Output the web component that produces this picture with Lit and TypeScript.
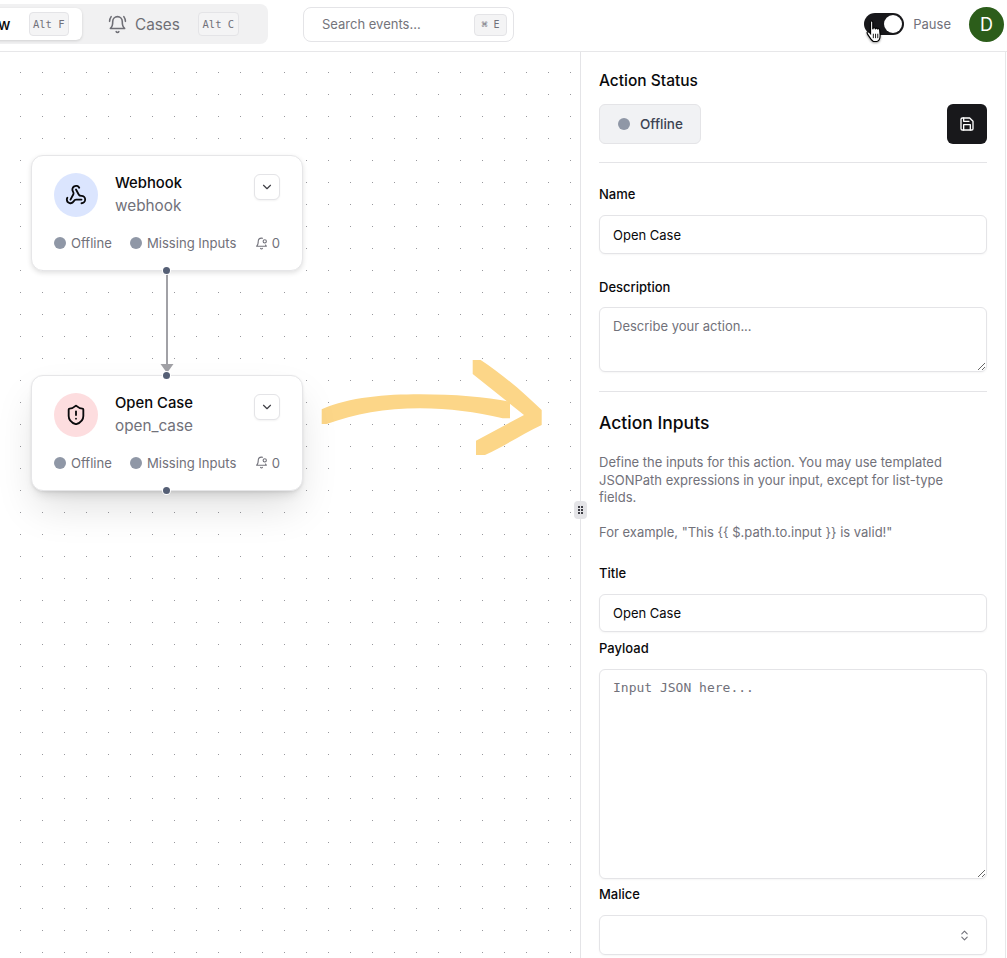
import { LitElement, html, css, svg } from "lit";
import { customElement } from "lit/decorators.js";

const webhookIcon = svg`<path d="M18 16.98h-5.99c-1.1 0-1.95.94-2.48 1.9A4 4 0 0 1 2 17c.01-.7.2-1.4.57-2"/><path d="m6 17 3.13-5.78c.53-.97.1-2.18-.5-3.1a4 4 0 1 1 6.89-4.06"/><path d="m12 6 3.13 5.73C15.66 12.7 16.9 13 18 13a4 4 0 0 1 0 8"/>`;
const shieldIcon = svg`<path d="M20 13c0 5-3.5 7.5-7.66 8.95a1 1 0 0 1-.67-.01C7.5 20.5 4 18 4 13V6a1 1 0 0 1 1-1c2 0 4.5-1.2 6.24-2.72a1.17 1.17 0 0 1 1.52 0C14.51 3.81 17 5 19 5a1 1 0 0 1 1 1z"/><path d="M12 8v4"/><path d="M12 16h.01"/>`;
const chevron = svg`<path d="m6 9 6 6 6-6"/>`;
const bellDot = svg`<path d="M19.4 14.9C20.2 16.4 21 17 21 17H3s3-2 3-9c0-3.3 2.7-6 6-6 .7 0 1.3.1 1.9.3"/><path d="M10.3 21a1.94 1.94 0 0 0 3.4 0"/><circle cx="18" cy="8" r="3"/>`;
const bellRing = svg`<path d="M6 8a6 6 0 0 1 12 0c0 7 3 9 3 9H3s3-2 3-9"/><path d="M10.3 21a1.94 1.94 0 0 0 3.4 0"/><path d="M4 2C2.8 3.7 2 5.7 2 8"/><path d="M22 8c0-2.3-.8-4.3-2-6"/>`;
const saveIcon = svg`<path d="M19 21H5a2 2 0 0 1-2-2V5a2 2 0 0 1 2-2h11l5 5v11a2 2 0 0 1-2 2z"/><polyline points="17 21 17 13 7 13 7 21"/><polyline points="7 3 7 8 15 8"/>`;
const upDown = svg`<path d="m7 15 5 5 5-5"/><path d="m7 9 5-5 5 5"/>`;

@customElement("app-root")
export class AppRoot extends LitElement {
  static styles = css`
    :host {
      display: block;
      width: 1007px;
      height: 958px;
      overflow: hidden;
      background: #fff;
      font-family: Inter, "Liberation Sans", sans-serif;
      color: #09090b;
      position: relative;
    }
    * { box-sizing: border-box; }
    svg.i { fill: none; stroke: currentColor; stroke-width: 2; stroke-linecap: round; stroke-linejoin: round; display: block; flex: none; }

    header {
      height: 52px;
      border-bottom: 1px solid #e7e7e9;
      display: flex;
      align-items: flex-start;
      position: relative;
    }
    .tabs {
      margin-left: -62px;
      margin-top: 4px;
      height: 40px;
      width: 330px;
      background: #f1f1f2;
      border-radius: 8px;
      display: flex;
      align-items: center;
      padding: 0 4px;
      flex: none;
    }
    .tab {
      display: flex;
      align-items: center;
      height: 32px;
      font-size: 15px;
      font-weight: 500;
      white-space: nowrap;
    }
    .tab.active {
      width: 140px;
      background: #fff;
      border-radius: 6px;
      box-shadow: 0 1px 3px rgba(0,0,0,.14);
      color: #09090b;
      justify-content: flex-end;
      padding-right: 13px;
      gap: 18px;
    }
    .tab.other {
      color: #6f6f76;
      margin-left: 26px;
      font-weight: 400;
      font-size: 15.3px;
    }
    .tab.other svg { margin-right: 8px; }
    .kbd {
      font-family: "DejaVu Sans Mono", "Liberation Mono", monospace;
      font-size: 10.5px;
      height: 24px;
      width: 42px;
      border: 1px solid #e4e4e7;
      background: #f4f4f5;
      border-radius: 4px;
      display: inline-flex;
      align-items: center;
      justify-content: center;
      color: #71717a;
      font-weight: 400;
    }
    .tab.other .kbd { margin-left: 18px; width: 41px; }
    .search {
      margin-left: 35px;
      margin-top: 7px;
      width: 211px;
      height: 35px;
      border: 1px solid #e4e4e7;
      border-radius: 8px;
      display: flex;
      align-items: center;
      justify-content: space-between;
      padding: 0 6px 1px 18px;
      font-size: 13px;
      color: #74747b;
      flex: none;
    }
    .search .kbd { height: 22px; width: 33px; font-size: 10px; margin-top: 1px; }
    .right {
      margin-left: auto;
      display: flex;
      align-items: center;
      height: 48px;
      padding-right: 3px;
    }
    .toggle {
      width: 40px;
      height: 22px;
      border-radius: 11px;
      background: #18181b;
      position: relative;
      display: flex;
      justify-content: flex-end;
      align-items: center;
      padding-right: 2px;
    }
    .knob { width: 18px; height: 18px; border-radius: 50%; background: #fff; }
    .cursor {
      position: absolute; left: 1px; top: 6px; width: 20px; height: 25px;
      filter: drop-shadow(0 1px 1px rgba(0,0,0,.4));
    }
    .pause { font-size: 13px; color: #71717a; margin-left: 9px; }
    .avatar {
      width: 35px; height: 35px; border-radius: 50%;
      background: #2c5d1a; color: #fff;
      display: flex; align-items: center; justify-content: center;
      font-size: 18px; margin-left: 18px;
    }

    main { display: flex; height: 906px; }
    .canvas {
      width: 580px;
      flex: none;
      position: relative;
      background-color: #fff;
      background-image: radial-gradient(circle at 0.5px 0.5px, #98989d 0.6px, transparent 0.75px);
      background-size: 22px 22px;
      background-position: 20px 20px;
    }
    .node {
      position: absolute;
      left: 31px;
      width: 272px;
      background: #fff;
      border: 1px solid #e6e6e8;
      border-radius: 12px;
      box-shadow: 0 2px 5px rgba(0,0,0,.12);
      padding: 17px 22px 0 22px;
    }
    .node.selected { box-shadow: 0 20px 40px -5px rgba(0,0,0,.13), 0 8px 12px -6px rgba(0,0,0,.14), 0 1px 3px rgba(0,0,0,.08); }
    .node-top { display: flex; align-items: flex-start; }
    .badge {
      width: 44px; height: 44px; border-radius: 50%;
      display: flex; align-items: center; justify-content: center; flex: none;
      color: #09090b;
    }
    .badge.blue { background: #dbe5fe; }
    .badge.red { background: #fddddf; }
    .names { margin-left: 17px; flex: 1; }
    .title { font-size: 14.8px; font-weight: 450; line-height: 20px; }
    .sub { font-size: 15.3px; color: #71717a; line-height: 20px; margin-top: 3px; }
    .chev {
      width: 26px; height: 26px;
      border: 1px solid #e4e4e7; border-radius: 6px;
      display: flex; align-items: center; justify-content: center;
      color: #3f3f46; margin-top: 1px; background: #fff;
      box-shadow: 0 1px 2px rgba(0,0,0,.05);
    }
    .meta {
      display: flex; align-items: center;
      font-size: 13.1px; color: #71717a;
      margin-top: 17px;
      line-height: 18px;
    }
    .meta .dot { width: 12px; height: 12px; border-radius: 50%; background: #8f97a6; margin-right: 5px; flex: none; }
    .meta .gap { margin-left: 18px; }
    .meta .bell { margin-left: auto; display: flex; align-items: center; gap: 4px; }
    .handle {
      position: absolute; left: 50%; width: 7px; height: 7px; margin-left: -4px;
      border-radius: 50%; background: #555f75; box-shadow: 0 0 0 1px #fff;
    }
    .handle.b { bottom: -4px; }
    .handle.t { top: -4px; }
    .overlay { position: absolute; left: 0; top: 0; pointer-events: none; }
    .grip {
      position: absolute; left: 574px; top: 501px; width: 13px; height: 18px;
      background: #e4e4e7; border-radius: 4px;
      display: grid; grid-template-columns: 2px 2px; grid-auto-rows: 2px;
      gap: 1px; justify-content: center; align-content: center;
    }
    .grip i { background: #3f3f46; display: block; }

    aside {
      flex: 1;
      border-left: 1px solid #e4e4e7;
      border-right: 1px solid #e7e7e9;
      margin-right: 1px;
      padding: 19px 18px 0 18px;
      overflow: hidden;
      min-width: 0;
      position: relative;
    }
    h3 { font-size: 15.5px; font-weight: 450; margin: 0; line-height: 20px; }
    .status { display: flex; justify-content: space-between; margin-top: 13px; }
    .offline {
      width: 102px; height: 40px;
      border: 1px solid #e4e4e7; background: #f1f2f4; border-radius: 6px;
      display: flex; align-items: center; padding-left: 18px;
      font-size: 13.5px; font-weight: 500; color: #3c4352; gap: 10px;
    }
    .offline span { width: 12px; height: 12px; border-radius: 50%; background: #8f97a6; }
    .save {
      width: 40px; height: 40px; background: #18181b; color: #fff;
      border-radius: 6px; display: flex; align-items: center; justify-content: center;
    }
    hr { border: 0; border-top: 1px solid #e4e4e7; margin: 0; }
    label { display: block; font-size: 13px; font-weight: 450; line-height: 18px; color: #09090b; }
    input, textarea {
      display: block; width: 100%;
      border: 1px solid #e4e4e7; border-radius: 6px;
      font: 400 13px Inter, "Liberation Sans", sans-serif;
      color: #09090b; background: #fff; outline: none;
      box-shadow: 0 1px 2px rgba(0,0,0,.04);
      padding: 0 13px;
    }
    input { height: 39px; }
    textarea { padding-top: 10px; padding-bottom: 8px; }
    ::placeholder { color: #71717a; opacity: 1; }
    textarea.mono { font-family: "DejaVu Sans Mono", "Liberation Mono", monospace; font-size: 13px; }
    .select {
      height: 40px; border: 1px solid #e4e4e7; border-radius: 6px;
      display: flex; align-items: center; justify-content: flex-end;
      padding-right: 15px; color: #71717a;
      box-shadow: 0 1px 2px rgba(0,0,0,.04);
    }
    h2 { font-size: 17.5px; font-weight: 450; margin: 0; line-height: 24px; }
    p { font-size: 13px; line-height: 17.5px; color: #71717a; margin: 0; max-width: 375px; }
    .mt-name { margin-top: 22px; }
    .mt-12 { margin-top: 12px; }
    .mt-24 { margin-top: 24px; }
    .mt-11 { margin-top: 11px; }
    .mt-18 { margin-top: 18px; }
    .mt-19 { margin-top: 19px; }
    .mt-6 { margin-top: 6px; }
    .mt-7 { margin-top: 7px; }
    .p2 { margin-top: 17.5px; }
    .title-label { margin-top: 22.5px; }
    .desc { height: 65px; }
    .short { height: 38px; }
    .payload { height: 210px; }
  `;

  private node(top: number, h: number, badge: string, icon: unknown, title: string, sub: string, extra: string, handleTop: boolean) {
    return html`<div class="node ${extra}" style="top:${top}px;height:${h}px">
      <div class="node-top">
        <div class="badge ${badge}"><svg class="i" viewBox="0 0 24 24" width="22" height="22">${icon}</svg></div>
        <div class="names"><div class="title">${title}</div><div class="sub">${sub}</div></div>
        <div class="chev"><svg class="i" viewBox="0 0 24 24" width="14" height="14">${chevron}</svg></div>
      </div>
      <div class="meta">
        <span class="dot"></span>Offline
        <span class="dot gap"></span>Missing Inputs
        <span class="bell"><svg class="i" viewBox="0 0 24 24" width="13" height="13" stroke-width="1.8">${bellDot}</svg>0</span>
      </div>
      ${handleTop ? html`<div class="handle t"></div>` : ""}
      <div class="handle b"></div>
    </div>`;
  }

  render() {
    return html`
      <header>
        <div class="tabs">
          <div class="tab active">Workflow <span class="kbd">Alt F</span></div>
          <div class="tab other">
            <svg class="i" viewBox="0 0 24 24" width="19" height="19" stroke-width="1.6">${bellRing}</svg>
            Cases <span class="kbd">Alt C</span>
          </div>
        </div>
        <div class="search">Search events... <span class="kbd">⌘ E</span></div>
        <div class="right">
          <div class="toggle">
            <div class="knob"></div>
            <svg class="cursor" viewBox="0 0 18 22">
              <path d="M5 2.500c0-1.300 2-1.300 2 0V9l.3-.9c.6-.8 1.800-.6 2 .3.5-.7 1.700-.6 2 .3.6-.5 1.800-.2 1.900.8l.4 5c0 2.500-1.200 5-3 5.500H7.500C6 19 4.500 17 3 14.500 2 13 1.500 12 2 11.500c.6-.6 1.700 0 3 1.500z" fill="#fff" stroke="#000" stroke-width="1"/>
              <path d="M7.500 13v4M9.500 13v4M11.500 13v4" stroke="#000" stroke-width=".8"/>
            </svg>
          </div>
          <span class="pause">Pause</span>
          <div class="avatar">D</div>
        </div>
      </header>
      <main>
        <div class="canvas">
          <svg class="overlay" width="580" height="906" viewBox="0 52 580 906">
            <path d="M167 271V368" stroke="#a1a1a6" stroke-width="2" fill="none"/>
            <path d="M160.500 364h13l-6.500 9z" fill="#a1a1a6"/>
            <path d="M321.700 409.300C350 397 385 394.300 420 394.300 455 394.300 485 397 510 401.700V418.300H502.700C475 412 450 408.300 420 408.300 385 408.300 355 414 326.700 424H321.700Z" fill="#fcd688"/>
            <path d="M472.700 360H480.700C505 376 525 394 541.700 410V425C522 434 505 446 485 455H476V440.700L524 415 472.700 374Z" fill="#fcd688"/>
          </svg>
          ${this.node(103, 116, "blue", webhookIcon, "Webhook", "webhook", "", false)}
          ${this.node(322.5, 116, "red", shieldIcon, "Open Case", "open_case", "selected", true)}
        </div>
        <div class="grip">${[0, 1, 2, 3, 4, 5].map(() => html`<i></i>`)}</div>
        <aside>
          <h3>Action Status</h3>
          <div class="status">
            <div class="offline"><span></span>Offline</div>
            <div class="save"><svg class="i" viewBox="0 0 24 24" width="16" height="16">${saveIcon}</svg></div>
          </div>
          <hr class="mt-18" />
          <label class="mt-name">Name</label>
          <input class="mt-12" value="Open Case" />
          <label class="mt-24">Description</label>
          <textarea class="mt-11 desc" placeholder="Describe your action..."></textarea>
          <hr class="mt-19" />
          <h2 class="mt-19">Action Inputs</h2>
          <p class="mt-19">Define the inputs for this action. You may use templated JSONPath expressions in your input, except for list-type fields.</p>
          <p class="p2">For example, "This {{ $.path.to.input }} is valid!"</p>
          <label class="title-label">Title</label>
          <input class="mt-12 short" value="Open Case" />
          <label class="mt-7">Payload</label>
          <textarea class="mono mt-12 payload" placeholder="Input JSON here..."></textarea>
          <label class="mt-6">Malice</label>
          <div class="select mt-12"><svg class="i" viewBox="0 0 24 24" width="13" height="13">${upDown}</svg></div>
        </aside>
      </main>
    `;
  }
}
